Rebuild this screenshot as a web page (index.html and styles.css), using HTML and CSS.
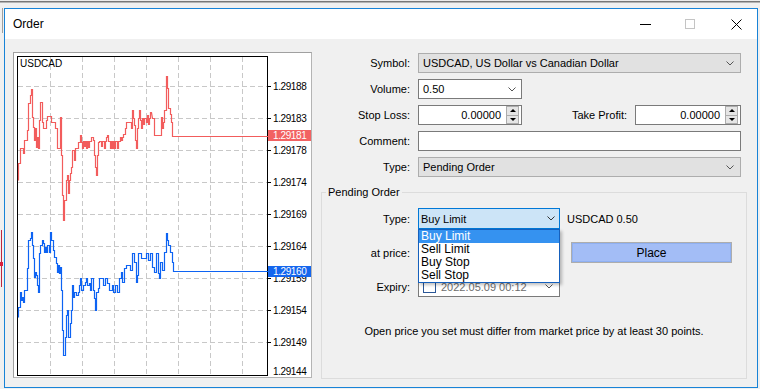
FILE: index.html
```html
<!DOCTYPE html>
<html>
<head>
<meta charset="utf-8">
<title>Order</title>
<link rel="stylesheet" href="styles.css">
</head>
<body>
<div class="topband"></div>
<div class="main">
  <div class="leftstrip">
    <span class="ls-gray"></span>
    <span class="ls-red ls-r1"></span>
    <span class="ls-mark"></span>
    <span class="ls-red ls-r2"></span>
  </div>
  <div class="dialog">
    <div class="titlebar">
      <span class="title">Order</span>
      <svg class="tb-min" width="11" height="11" viewBox="0 0 11 11"><path d="M0 5.5H11" stroke="#000" stroke-width="1"/></svg>
      <svg class="tb-max" width="10" height="11" viewBox="0 0 10 11"><rect x="0.5" y="0.5" width="9" height="9" fill="none" stroke="#c4c4c4"/></svg>
      <svg class="tb-close" width="11" height="11" viewBox="0 0 11 11"><path d="M0.5 0.5L10.5 10.5M10.5 0.5L0.5 10.5" stroke="#000" stroke-width="1"/></svg>
    </div>
    <div class="body">
      <div class="chart">
        <svg width="297" height="324" viewBox="14 53 297 324" class="chart-svg">
          <rect x="14" y="53" width="297" height="324" fill="#fff"/>
          <g stroke="#c8c8c8" stroke-dasharray="5 3" stroke-width="1">
            <path d="M50.5 57V375M82.5 57V375M114.5 57V375M146.5 57V375M178.5 57V375M210.5 57V375M242.5 57V375"/>
            <path d="M18 86.5H267M18 118.5H267M18 150.5H267M18 182.5H267M18 214.5H267M18 246.5H267M18 278.5H267M18 310.5H267M18 342.5H267"/>
          </g>
          <rect x="17.5" y="56.5" width="250" height="319" fill="none" stroke="#000"/>
          <path d="M268 86.5h3M268 118.5h3M268 150.5h3M268 182.5h3M268 214.5h3M268 246.5h3M268 278.5h3M268 310.5h3M268 342.5h3" stroke="#000"/>
          <text x="20" y="67" class="sym">USDCAD</text>
          <g class="axis">
            <text x="273" y="90">1.29188</text>
            <text x="273" y="122">1.29183</text>
            <text x="273" y="154">1.29178</text>
            <text x="273" y="186">1.29174</text>
            <text x="273" y="218">1.29169</text>
            <text x="273" y="250">1.29164</text>
            <text x="273" y="282">1.29159</text>
            <text x="273" y="314">1.29154</text>
            <text x="273" y="346">1.29149</text>
            <text x="273" y="375">1.29144</text>
          </g>
          <g transform="translate(0.5,0.5)" fill="none" stroke-width="1.2">
            <polyline stroke="#f25c5c" points="18,180 18,163 20,163 20,148 23,148 23,153 24,153 24,140 27,140 27,130 28,130 28,103 30,103 30,95 31,95 31,89 32,89 32,117 33,117 33,127 34,127 34,140 35,140 35,128 36,128 36,147 37,147 37,137 38,137 38,148 39,148 39,120 40,120 40,102 42,102 42,122 43,122 43,128 46,128 46,120 47,120 47,116 51,116 51,122 55,122 55,128 57,128 57,148 60,148 60,117 61,117 61,155 62,155 62,195 63,195 63,220 64,220 64,200 66,200 66,180 67,180 67,175 68,175 68,193 69,193 69,180 70,180 70,173 71,173 71,167 72,167 72,150 74,150 74,160 75,160 75,148 78,148 78,142 80,142 80,135 81,135 81,142 82,142 82,148 83,148 83,141 84,141 84,146 85,146 85,141 86,141 86,148 87,148 87,141 88,141 88,147 89,147 89,141 91,141 91,137 93,137 93,140 94,140 94,155 95,155 95,167 96,167 96,175 97,175 97,155 98,155 98,142 99,142 99,141 101,141 101,146 102,146 102,141 104,141 104,148 105,148 105,141 106,141 106,137 107,137 107,135 108,135 108,141 110,141 110,148 111,148 111,141 112,141 112,148 113,148 113,141 114,141 114,148 115,148 115,141 117,141 117,148 118,148 118,141 120,141 120,137 121,137 121,140 122,140 122,137 123,137 123,134 125,134 125,128 126,128 126,122 131,122 131,128 132,128 132,110 133,110 133,118 134,118 134,125 135,125 135,140 136,140 136,148 137,148 137,128 138,128 138,118 139,118 139,110 140,110 140,120 141,120 141,128 142,128 142,118 143,118 143,124 144,124 144,118 146,118 146,122 147,122 147,115 148,115 148,124 149,124 149,118 150,118 150,112 151,112 152,118 154,118 154,135 161,135 161,117 162,117 162,128 163,128 163,122 164,122 164,110 166,110 166,76 167,76 167,88 168,88 168,108 170,108 170,114 171,114 171,122 172,122 172,136 268,136"/>
            <polyline stroke="#0d63f3" points="18,317 18,307 20,307 20,292 21,292 21,300 22,300 22,297 23,297 23,302 24,302 24,290 27,290 27,268 28,268 28,240 30,240 30,238 31,238 31,232 32,232 32,245 33,245 33,258 34,258 34,277 35,277 35,272 36,272 36,275 37,275 37,285 38,285 38,292 39,292 39,253 40,253 40,245 42,245 42,240 43,240 43,243 44,243 44,252 45,252 45,247 46,247 46,252 47,252 47,245 49,245 49,252 50,252 50,232 51,232 51,240 53,240 53,250 54,250 54,257 56,257 56,263 57,263 57,272 58,272 58,265 59,265 59,273 60,273 60,267 61,267 61,290 62,290 62,330 63,330 63,355 65,355 65,337 66,337 66,315 67,315 67,310 68,310 68,337 70,337 70,323 71,323 71,310 72,310 72,285 73,285 73,297 74,297 74,292 76,292 76,295 78,295 78,292 79,292 79,285 80,285 80,278 81,278 81,290 83,290 83,285 85,285 85,282 86,282 86,278 87,278 87,285 89,285 89,283 90,283 90,290 91,290 91,278 93,278 93,290 94,290 94,298 95,298 95,310 96,310 96,292 98,292 98,288 99,288 99,278 103,278 103,285 105,285 105,278 107,278 107,283 109,283 109,290 112,290 112,285 113,285 113,292 115,292 115,285 117,285 117,292 119,292 119,278 121,278 121,272 122,272 122,282 124,282 124,268 126,268 126,265 130,265 130,270 132,270 132,253 134,253 134,262 136,262 136,282 137,282 137,275 138,275 138,253 141,253 141,258 146,258 146,253 148,253 148,260 150,260 150,253 152,253 152,267 154,267 154,272 156,272 156,253 158,253 158,273 159,273 159,278 160,278 160,262 162,262 162,270 164,270 164,252 166,252 166,233 167,233 167,240 168,240 168,245 170,245 170,252 172,252 172,262 173,262 173,271 268,271"/>
          </g>
          <rect x="268" y="130" width="43" height="11" fill="#f26262"/>
          <text x="273" y="139" class="axis cur">1.29181</text>
          <rect x="268" y="266" width="43" height="11" fill="#1466ee"/>
          <text x="273" y="275" class="axis cur">1.29160</text>
        </svg>
      </div>
      <div class="form">
        <div class="rows">
          <label class="lbl">Symbol:</label>
          <div class="combo gray"><span class="val">USDCAD, US Dollar vs Canadian Dollar</span><svg class="chev" width="8" height="5" viewBox="0 0 8 5"><path d="M0.5 0.5L4 4L7.5 0.5" fill="none" stroke="#555"/></svg></div>

          <label class="lbl">Volume:</label>
          <div class="line"><div class="combo white vol"><span class="val">0.50</span><svg class="chev" width="8" height="5" viewBox="0 0 8 5"><path d="M0.5 0.5L4 4L7.5 0.5" fill="none" stroke="#555"/></svg></div></div>

          <label class="lbl">Stop Loss:</label>
          <div class="line">
            <div class="spin-input sl"><span class="num">0.00000</span><span class="spin"><span class="sb up"></span><span class="sb dn"></span></span></div>
            <label class="lbl tp-lbl">Take Profit:</label>
            <div class="spin-input tp"><span class="num">0.00000</span><span class="spin"><span class="sb up"></span><span class="sb dn"></span></span></div>
          </div>

          <label class="lbl">Comment:</label>
          <div class="text-input"></div>

          <label class="lbl">Type:</label>
          <div class="combo gray"><span class="val">Pending Order</span><svg class="chev" width="8" height="5" viewBox="0 0 8 5"><path d="M0.5 0.5L4 4L7.5 0.5" fill="none" stroke="#555"/></svg></div>
        </div>

        <fieldset class="group">
          <legend>Pending Order</legend>
          <div class="grows">
            <label class="lbl">Type:</label>
            <div class="combo focus"><span class="val">Buy Limit</span><svg class="chev" width="8" height="5" viewBox="0 0 8 5"><path d="M0.5 0.5L4 4L7.5 0.5" fill="none" stroke="#333"/></svg>
              <div class="dropdown">
                <div class="opt sel">Buy Limit</div>
                <div class="opt">Sell Limit</div>
                <div class="opt">Buy Stop</div>
                <div class="opt">Sell Stop</div>
              </div>
            </div>
            <span class="info">USDCAD 0.50</span>

            <label class="lbl">at price:</label>
            <div class="text-input"></div>
            <div class="place">Place</div>

            <label class="lbl">Expiry:</label>
            <div class="combo white date"><span class="check"></span><span class="val dim">2022.05.09 00:12</span><svg class="chev" width="8" height="5" viewBox="0 0 8 5"><path d="M0.5 0.5L4 4L7.5 0.5" fill="none" stroke="#555"/></svg></div>
            <span></span>
          </div>
          <p class="msg">Open price you set must differ from market price by at least 30 points.</p>
        </fieldset>
      </div>
    </div>
  </div>
</div>
</body>
</html>
```

FILE: styles.css
```css
* { box-sizing: border-box; }
html, body { margin: 0; padding: 0; }
body {
  width: 760px;
  height: 389px;
  overflow: hidden;
  background: #f0f0f0;
  font-family: "Liberation Sans", Arial, sans-serif;
  font-size: 11px;
  color: #000;
}
.topband {
  height: 8px;
  background: linear-gradient(to bottom, #ececec 0 1px, #777 1px 2px, #b4b4b4 2px 3px, #f0f0f0 3px);
}
.main { display: flex; height: 381px; }
.leftstrip {
  width: 4px;
  display: flex;
  flex-direction: column;
  background: #f0f0f0;
}
.ls-gray { display: block; width: 1px; height: 25px; margin-left: 2px; background: #a0a0a0; }
.ls-red { display: block; width: 1px; margin-left: 1px; background: #c02840; }
.ls-r1 { margin-top: 197px; height: 32px; }
.ls-mark { display: block; width: 3px; height: 4px; background: #d8203c; }
.ls-r2 { height: 21px; }

.dialog {
  width: 754px;
  height: 380px;
  border: 1px solid #1883d7;
  background: #f0f0f0;
  display: flex;
  flex-direction: column;
}
.titlebar {
  height: 30px;
  background: #fff;
  display: flex;
  align-items: center;
  padding-left: 8px;
}
.title { font-size: 12px; flex: 1; }
.tb-min { margin-right: 34px; }
.tb-max { margin-right: 36px; }
.tb-close { margin-right: 15px; }

.body {
  flex: 1;
  display: flex;
  padding: 13px 0 0 8px;
}
.chart {
  width: 299px;
  height: 326px;
  border: 1px solid #b4b4b4;
  border-top-color: #a0a0a0;
  border-left-color: #a0a0a0;
  background: #fff;
}
.chart-svg { display: block; }
.sym { font-family: "Liberation Sans", Arial, sans-serif; font-size: 10px; fill: #000; }
.axis text, text.axis { font-family: "Liberation Sans", Arial, sans-serif; font-size: 10px; letter-spacing: -0.4px; fill: #000; }
text.cur { fill: #fff; }

.form { margin-left: 9px; width: 426px; }
.rows {
  display: grid;
  grid-template-columns: 89px 323px;
  grid-auto-rows: 20px;
  column-gap: 8px;
  row-gap: 6px;
  padding-top: 1px;
}
.lbl { display: flex; align-items: center; justify-content: flex-end; white-space: nowrap; }
.line { display: flex; align-items: stretch; }

.combo {
  position: relative;
  display: flex;
  align-items: center;
  padding-left: 4px;
  padding-right: 6px;
  border: 1px solid #adadad;
}
.combo .val { flex: 1; white-space: nowrap; }
.combo.gray { background: #e1e1e1; }
.combo.white { background: #fff; border-color: #7a7a7a; }
.combo.vol { width: 104px; padding-right: 5px; }
.combo.focus { background: #cce4f7; border-color: #0078d7; padding-left: 2px; padding-right: 4px; }
.chev { display: block; }

.spin-input {
  display: flex;
  border: 1px solid #7a7a7a;
  background: #fff;
}
.spin-input.sl { width: 104px; }
.spin-input.tp { width: 106px; }
.spin-input .num { flex: 1; display: flex; align-items: center; justify-content: flex-end; padding-right: 5px; }
.spin { width: 13px; margin: 0 2px 0 0; display: flex; flex-direction: column; }
.sb {
  flex: 1;
  position: relative;
  background: #e5e5e5;
  border: 1px solid #acacac;
}
.sb.dn { border-top: none; }
.sb::after {
  content: "";
  position: absolute;
  left: 3px;
  width: 0;
  height: 0;
  border-left: 3px solid transparent;
  border-right: 3px solid transparent;
}
.sb.up::after { top: 2px; border-bottom: 3px solid #000; }
.sb.dn::after { top: 2px; border-top: 3px solid #000; }
.tp-lbl { flex: 1; padding-right: 8px; }

.text-input { border: 1px solid #7a7a7a; background: #fff; }

.group {
  margin: 8px 0 0 0;
  padding: 0 0 40px 0;
  min-inline-size: 0;
  border: 1px solid #dcdcdc;
}
.group legend {
  margin-left: 4px;
  padding: 0 2px;
  line-height: 14px;
}
.grows {
  display: grid;
  grid-template-columns: 88px 142px auto;
  grid-auto-rows: 21px;
  column-gap: 8px;
  row-gap: 13px;
  padding-top: 9px;
}
.info { display: flex; align-items: center; margin-left: -1px; }
.place {
  margin-left: 3px;
  width: 161px;
  display: flex;
  align-items: center;
  justify-content: center;
  background: #a3bdf6;
  border: 1px solid #adadad;
  box-shadow: inset 0 0 0 1px #8fb0f2;
  font-size: 12px;
}
.dropdown {
  position: absolute;
  left: -1px;
  top: calc(100% + 1px);
  width: 142px;
  border: 1px solid #1560bd;
  background: #fff;
  box-shadow: 2px 2px 3px rgba(0,0,0,0.25);
  z-index: 5;
}
.opt { height: 13px; line-height: 13px; padding-left: 2px; font-size: 12px; }
.opt.sel { background: #3592f0; color: #fff; }
.date { padding-left: 4px; }
.check {
  width: 13px;
  height: 13px;
  border: 1px solid #2b5797;
  background: #fff;
  margin-right: 5px;
}
.dim { color: #6d6d6d; }
.msg {
  margin: 27px 0 0 0;
  text-align: center;
  line-height: 14px;
}
```
